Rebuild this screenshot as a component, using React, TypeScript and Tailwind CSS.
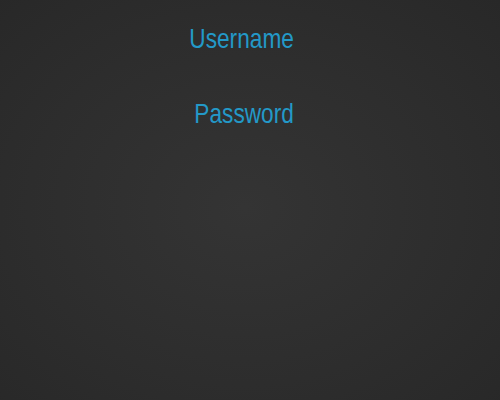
export default function App() {
  return (
    <div className="h-[400px] w-[500px] bg-[radial-gradient(ellipse_at_49%_52%,#343434_0%,#2d2d2d_60%,#282828_100%)]">
      {/* login labels, condensed sans */}
      <form className="flex flex-col items-center pt-[21px] pr-[16px] gap-[40px] text-[28px] leading-[35px] text-[#2399c8] font-['Liberation_Sans',Arial,sans-serif]">
        <label className="scale-x-[0.81]">Username</label>
        <label className="scale-x-[0.81] pl-[4px]">Password</label>
      </form>
    </div>
  );
}
